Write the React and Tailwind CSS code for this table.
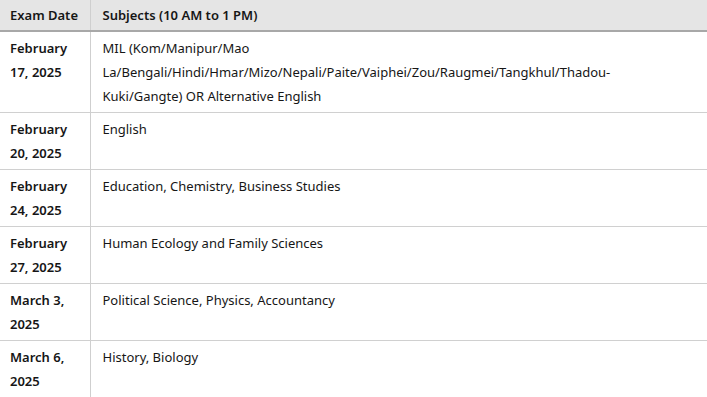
const rows = [
  {
    date: "February 17, 2025",
    subjects:
      "MIL (Kom/Manipur/Mao La/Bengali/Hindi/Hmar/Mizo/Nepali/Paite/Vaiphei/Zou/Raugmei/Tangkhul/Thadou-Kuki/Gangte) OR Alternative English",
  },
  { date: "February 20, 2025", subjects: "English" },
  { date: "February 24, 2025", subjects: "Education, Chemistry, Business Studies" },
  { date: "February 27, 2025", subjects: "Human Ecology and Family Sciences" },
  { date: "March 3, 2025", subjects: "Political Science, Physics, Accountancy" },
  { date: "March 6, 2025", subjects: "History, Biology" },
];

export default function App() {
  return (
    <div className="w-[707px] h-[397px] overflow-hidden bg-white text-[#161616] font-['Noto_Sans',sans-serif] text-[13px] leading-6">
      <table className="w-full table-fixed border-collapse">
        <colgroup>
          <col className="w-[90px]" />
          <col />
        </colgroup>
        <thead>
          <tr className="bg-[#e5e5e5] h-[31px] border-b-2 border-[#a8a8a8]">
            <th className="pl-[10px] pr-2 text-left font-semibold border-r border-[#cfcfcf]">Exam Date</th>
            <th className="pl-3 pr-2 text-left font-semibold">Subjects (10 AM to 1 PM)</th>
          </tr>
        </thead>
        <tbody>
          {rows.map((r) => (
            <tr key={r.date} className="border-b border-[#d0d0d0] align-top">
              <td className="pl-[10px] pr-2 py-1 font-semibold border-r border-[#cfcfcf]">{r.date}</td>
              <td className="pl-3 pr-8 py-1">{r.subjects}</td>
            </tr>
          ))}
        </tbody>
      </table>
    </div>
  );
}
